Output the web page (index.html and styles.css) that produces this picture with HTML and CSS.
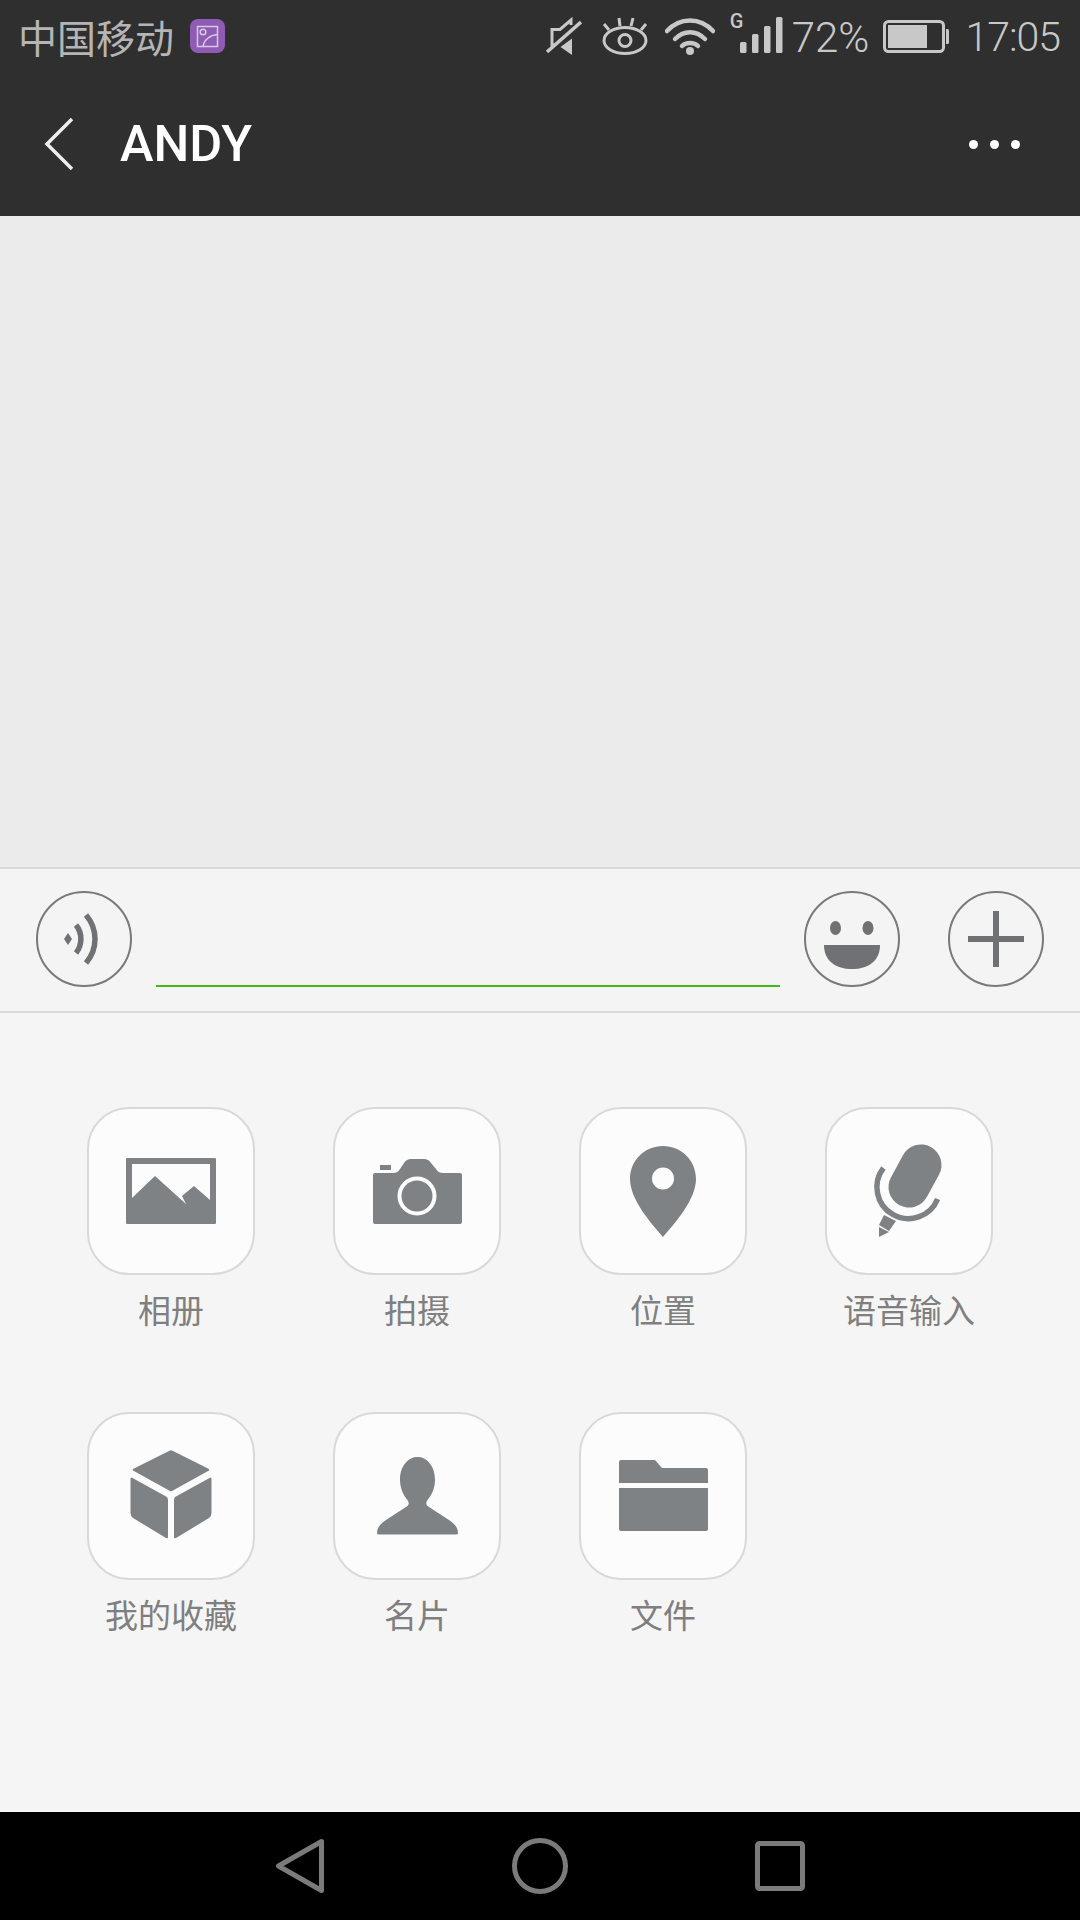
FILE: index.html
```html
<!DOCTYPE html>
<html lang="zh-CN">
<head>
    <meta charset="UTF-8">
    <title>ANDY</title>
    <link rel="stylesheet" href="styles.css">
</head>
<body>
<div class="screen">

    <header class="topbar">
        <div class="status">
            <span class="carrier">中国移动</span>
            <svg class="notice" width="35" height="34" viewBox="0 0 35 34">
                <rect width="35" height="34" rx="8" fill="#8e5bb5"/>
                <g fill="none" stroke="#d9c9e6" stroke-width="1.5">
                    <rect x="7.5" y="7.5" width="20" height="20"/>
                    <circle cx="13" cy="13" r="2.8"/>
                    <path d="M13 27.5C14 21 20 16 27.5 15.5"/>
                </g>
            </svg>

            <svg class="st-mute" width="36" height="38" viewBox="0 0 36 38">
                <path d="M25 8V3L14 12.500H6V28H9" fill="none" stroke="#c8c8c8" stroke-width="3"/>
                <path d="M14.500 30L26 21.500V38Z" fill="#c8c8c8"/>
                <path d="M1 35L35 5" stroke="#c8c8c8" stroke-width="3.500"/>
            </svg>
            <svg class="st-eye" width="46" height="38" viewBox="0 0 46 38">
                <ellipse cx="23" cy="23.500" rx="21" ry="13" fill="none" stroke="#c8c8c8" stroke-width="3"/>
                <circle cx="23" cy="23.500" r="6" fill="none" stroke="#c8c8c8" stroke-width="3"/>
                <path d="M2 7L7 13M17 1L18 9M31 1L29 9M44 7L39 13" stroke="#c8c8c8" stroke-width="3"/>
            </svg>
            <svg class="st-wifi" width="50" height="38" viewBox="0 0 50 38">
                <g fill="none" stroke="#c8c8c8" stroke-width="4.500" stroke-linecap="round">
                    <path d="M2 14C15 0 35 0 48 14"/>
                    <path d="M10 22C19 13 31 13 40 22"/>
                    <path d="M17 29C21 25 29 25 33 29"/>
                </g>
                <circle cx="25" cy="34" r="4" fill="#c8c8c8"/>
            </svg>
            <div class="st-signal">
                <span class="st-g">G</span>
                <svg width="46" height="38" viewBox="0 0 46 38">
                    <rect x="3" y="25" width="6.500" height="11" rx="1.500" fill="#c8c8c8"/>
                    <rect x="15" y="17" width="6.500" height="19" rx="1.500" fill="#c8c8c8"/>
                    <rect x="27" y="9" width="6.500" height="27" rx="1.500" fill="#c8c8c8"/>
                    <rect x="39" y="0" width="6.500" height="36" rx="1.500" fill="#c8c8c8"/>
                </svg>
            </div>
            <span class="st-text st-percent">72%</span>
            <svg class="st-battery" width="66" height="33" viewBox="0 0 66 33">
                <rect x="1.500" y="1.500" width="59" height="30" rx="4" fill="none" stroke="#c8c8c8" stroke-width="3"/>
                <rect x="5" y="5" width="39" height="23" fill="#c8c8c8"/>
                <path d="M63 9H64.500A1.500 1.500 0 0 1 66 10.500V22.500A1.500 1.500 0 0 1 64.500 24H63Z" fill="#c8c8c8"/>
            </svg>
            <span class="st-text st-time">17:05</span>
        </div>

        <div class="toolbar">
            <svg class="back" width="30" height="54" viewBox="0 0 30 54">
                <path d="M28 2L3 27L28 52" fill="none" stroke="#eeeeee" stroke-width="3.500"/>
            </svg>
            <h1 class="title">ANDY</h1>
            <div class="more">
                <span></span><span></span><span></span>
            </div>
        </div>
    </header>

    <main class="chat"></main>

    <div class="inputbar">
        <svg class="round" width="96" height="96" viewBox="0 0 96 96">
            <circle cx="48" cy="48" r="47" fill="none" stroke="#77797c" stroke-width="2"/>
            <path d="M32 42L36 48L32 54L28 48Z" fill="#6f7174"/>
            <path d="M40 34C46.500 42 46.500 54 40 62" fill="none" stroke="#6f7174" stroke-width="5.500"/>
            <path d="M50 24C62 38 62 58 50 72" fill="none" stroke="#6f7174" stroke-width="5.500"/>
        </svg>
        <div class="textline"></div>
        <svg class="round emoji" width="96" height="96" viewBox="0 0 96 96">
            <circle cx="48" cy="48" r="47" fill="none" stroke="#77797c" stroke-width="2"/>
            <ellipse cx="31.500" cy="37" rx="5.500" ry="7" fill="#6f7174"/>
            <ellipse cx="64" cy="37" rx="5.500" ry="7" fill="#6f7174"/>
            <path d="M20 54H76C76 70 64 78 48 78C32 78 20 70 20 54Z" fill="#6f7174"/>
        </svg>
        <svg class="round plus" width="96" height="96" viewBox="0 0 96 96">
            <circle cx="48" cy="48" r="47" fill="none" stroke="#77797c" stroke-width="2"/>
            <rect x="20" y="45" width="56" height="6" fill="#6f7174"/>
            <rect x="45" y="20" width="6" height="56" fill="#6f7174"/>
        </svg>
    </div>

    <section class="panel">
        <div class="action">
            <div class="tile">
                <svg width="164" height="164" viewBox="2 2 164 164">
                    <path fill-rule="evenodd" d="M40 51H128A1.500 1.500 0 0 1 129 52V116A1.500 1.500 0 0 1 128 117H40A1.500 1.500 0 0 1 39 116V52A1.500 1.500 0 0 1 40 51ZM45 57V91L68 69L99 97L95 89L107 79L123 93V57Z" fill="#7e8285"/>
                </svg>
            </div>
            <span class="label">相册</span>
        </div>
        <div class="action">
            <div class="tile">
                <svg width="164" height="164" viewBox="2 2 164 164">
                    <path d="M42 66H60C63 66 65 65 67 62L71 56C73 53 75 52 78 52H91C94 52 96 53 98 56L103 62C105 65 107 66 110 66H127A2 2 0 0 1 129 68V115A2 2 0 0 1 127 117H42A2 2 0 0 1 40 115V68A2 2 0 0 1 42 66Z" fill="#7e8285"/>
                    <rect x="47" y="58" width="11" height="5" fill="#7e8285"/>
                    <circle cx="84" cy="89" r="17.500" fill="#7e8285" stroke="#fcfcfc" stroke-width="4"/>
                </svg>
            </div>
            <span class="label">拍摄</span>
        </div>
        <div class="action">
            <div class="tile">
                <svg width="164" height="164" viewBox="2 2 164 164">
                    <path fill-rule="evenodd" d="M84 39C102 39 117 53 117 72C117 92 97 115 84 130C71 115 51 92 51 72C51 53 66 39 84 39ZM84 60.500A11 11 0 1 0 84 82.500A11 11 0 1 0 84 60.500Z" fill="#7e8285"/>
                </svg>
            </div>
            <span class="label">位置</span>
        </div>
        <div class="action">
            <div class="tile">
                <svg width="164" height="164" viewBox="2 2 164 164">
                    <path d="M96 58L84 80" stroke="#7e8285" stroke-width="41" stroke-linecap="round"/>
                    <path d="M58.400 61A31.500 31.500 0 1 0 112.600 92" fill="none" stroke="#7e8285" stroke-width="5.500"/>
                    <path d="M59 108L71 114L64 124L54 118Z" fill="#7e8285"/>
                    <path d="M54 120L64 125L54 130Z" fill="#7e8285"/>
                </svg>
            </div>
            <span class="label">语音输入</span>
        </div>
        <div class="action">
            <div class="tile">
                <svg width="164" height="164" viewBox="2 2 164 164">
                    <path d="M83 38.500Q84 38 85 38.500L122 57Q122.500 58 122 58.500L85 79Q84 79.500 83 79L46 58.500Q45.500 58 46 57Z" fill="#7e8285"/>
                    <path d="M43.500 67Q43.500 64.500 45.500 66L80 85Q81 86.500 81 88V125Q81 127 79 126L46 106Q43.500 104 43.500 101Z" fill="#7e8285"/>
                    <path d="M124.500 67Q124.500 64.500 122.500 66L88 85Q87 86.500 87 88V125Q87 127 89 126L122 106Q124.500 104 124.500 101Z" fill="#7e8285"/>
                </svg>
            </div>
            <span class="label">我的收藏</span>
        </div>
        <div class="action">
            <div class="tile">
                <svg width="164" height="164" viewBox="1 2 164 164">
                    <path d="M83.500 45C92 45 101 53 101 68C101 77 97 84 93.500 88C91.500 91 92 93 95 95L115 108C121 112 124 116 124 121Q124 122.500 122 122.500H45Q43 122.500 43 121C43 116 46 112 52 108L72 95C75 93 75.500 91 73.500 88C70 84 66 77 66 68C66 53 75 45 83.500 45Z" fill="#7e8285"/>
                </svg>
            </div>
            <span class="label">名片</span>
        </div>
        <div class="action">
            <div class="tile">
                <svg width="164" height="164" viewBox="1 2 164 164">
                    <path d="M41 48H75L82 56H126A2 2 0 0 1 128 58V71H39V50A2 2 0 0 1 41 48Z" fill="#7e8285"/>
                    <path d="M39 76H128V117A2 2 0 0 1 126 119H41A2 2 0 0 1 39 117Z" fill="#7e8285"/>
                </svg>
            </div>
            <span class="label">文件</span>
        </div>
    </section>

    <nav class="navbar">
        <svg width="60" height="60" viewBox="0 0 60 60">
            <path d="M51.500 5.500L8.500 30L51.500 54.500Z" fill="none" stroke="#7b7b7b" stroke-width="5" stroke-linejoin="round"/>
        </svg>
        <svg width="60" height="60" viewBox="0 0 60 60">
            <circle cx="30" cy="30" r="25.500" fill="none" stroke="#7b7b7b" stroke-width="5"/>
        </svg>
        <svg width="60" height="60" viewBox="0 0 60 60">
            <rect x="7.500" y="7.500" width="45" height="45" rx="2" fill="none" stroke="#7b7b7b" stroke-width="5"/>
        </svg>
    </nav>

</div>
</body>
</html>
```

FILE: styles.css
```css
* {
    box-sizing: border-box;
}

body {
    margin: 0;
    font-family: Roboto, "Noto Sans CJK SC", sans-serif;
    background-color: #f5f5f5;
}

svg {
    display: block;
    flex-shrink: 0;
}

.screen {
    width: 1080px;
    height: 1920px;
    display: flex;
    flex-direction: column;
    overflow: hidden;
}

/* status bar and title */
.topbar {
    height: 216px;
    background-color: #2f2f2f;
}

.status {
    height: 72px;
    padding: 0 20px 0 18px;
    display: flex;
    align-items: center;
    color: #c8c8c8;
}

.carrier {
    font-family: "Noto Sans CJK SC", sans-serif;
    font-size: 39px;
    font-weight: 400;
    color: #b5b5b5;
}

.notice {
    margin-left: 16px;
    margin-right: auto;
}

.st-eye {
    margin-left: 20px;
}

.st-wifi {
    margin-left: 17px;
}

.st-signal {
    margin-left: 12px;
    position: relative;
    width: 56px;
    display: flex;
    justify-content: flex-end;
}

.st-g {
    position: absolute;
    left: 3px;
    top: -8px;
    font-size: 20px;
    font-weight: 500;
}

.st-text {
    padding-top: 2px;
    font-size: 41px;
    font-weight: 300;
}

.st-percent {
    margin-left: 9px;
    font-size: 42px;
}

.st-battery {
    margin-left: 14px;
}

.st-time {
    margin-left: 16px;
    letter-spacing: -1px;
}

.toolbar {
    height: 144px;
    padding: 0 44px 0 44px;
    display: flex;
    align-items: center;
}

.title {
    margin: 0 0 2px 46px;
    font-size: 50.5px;
    font-weight: 500;
    color: #ffffff;
}

.more {
    margin-left: auto;
    display: flex;
    gap: 12px;
    padding-right: 16px;
}

.more span {
    width: 9px;
    height: 9px;
    border-radius: 50%;
    background-color: #ffffff;
}

.chat {
    height: 651px;
    background-color: #ebebeb;
}

/* message input row */
.inputbar {
    height: 146px;
    padding: 0 36px 2px 36px;
    display: flex;
    align-items: center;
    background-color: #f4f4f4;
    border-top: 2px solid #d9d9d9;
    border-bottom: 2px solid #d9d9d9;
}

.textline {
    width: 625px;
    height: 96px;
    margin-left: 24px;
    border-bottom: 2px solid #45b81a;
}

.emoji {
    margin-left: 24px;
}

.plus {
    margin-left: 48px;
}

/* attachment grid */
.panel {
    flex: 1;
    padding: 94px 0 0 87px;
    display: grid;
    grid-template-columns: repeat(4, 168px);
    grid-auto-rows: 226px;
    column-gap: 78px;
    row-gap: 79px;
    align-content: start;
}

.action {
    display: flex;
    flex-direction: column;
    align-items: center;
}

.tile {
    width: 168px;
    height: 168px;
    border: 2px solid #d9d9d9;
    border-radius: 42px;
    background-color: #fcfcfc;
}

.label {
    margin-top: 12px;
    font-family: "Noto Sans CJK SC", sans-serif;
    font-size: 33px;
    line-height: 44px;
    color: #7f7f7f;
}

.navbar {
    height: 108px;
    display: flex;
    justify-content: center;
    align-items: center;
    gap: 180px;
    background-color: #000000;
}
```
